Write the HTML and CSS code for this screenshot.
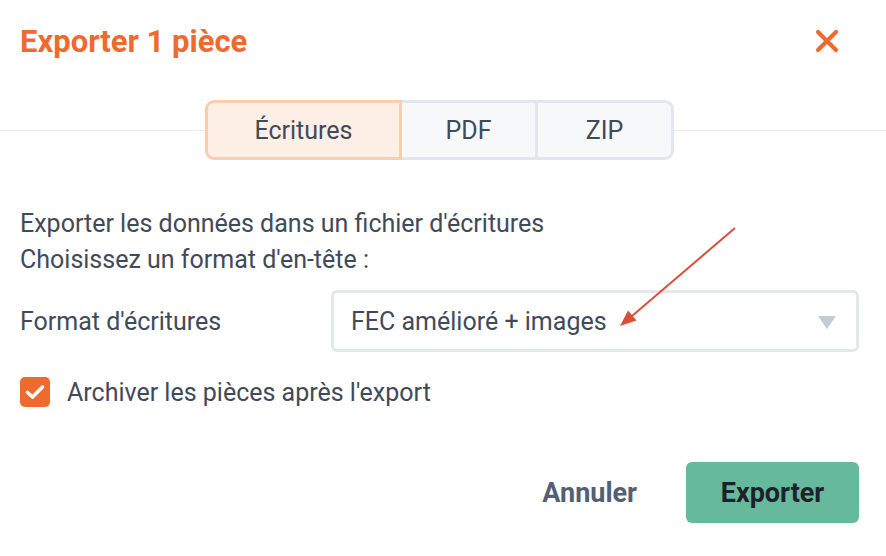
FILE: index.html
```html
<!DOCTYPE html>
<html lang="fr">
<head>
    <meta charset="UTF-8">
    <meta name="viewport" content="width=device-width, initial-scale=1.0">
    <title>Exporter 1 pièce</title>
    <link rel="stylesheet" href="styles.css">
</head>
<body>
    <div class="modal">
        <header class="modal-header">
            <h1 class="modal-title">Exporter 1 pièce</h1>
            <button class="close-btn" aria-label="Fermer">
                <svg width="24" height="24" viewBox="0 0 24 24">
                    <path d="M3 3 L21 21 M21 3 L3 21" stroke="#ee6a2f" stroke-width="4.2" stroke-linecap="round"/>
                </svg>
            </button>
        </header>

        <div class="tabs-row">
            <span class="tabs-line tabs-line-left"></span>
            <div class="tabs">
                <button class="tab active tab-wide">Écritures</button>
                <button class="tab">PDF</button>
                <button class="tab">ZIP</button>
            </div>
            <span class="tabs-line"></span>
        </div>

        <main class="modal-body">
            <p class="intro">Exporter les données dans un fichier d'écritures<br>Choisissez un format d'en-tête :</p>

            <div class="form-row">
                <label class="form-label" for="format">Format d'écritures</label>
                <div class="select">
                    <span id="format">FEC amélioré + images</span>
                    <span class="caret"></span>
                </div>
            </div>

            <label class="check-row">
                <span class="checkbox">
                    <svg width="24" height="24" viewBox="0 0 24 24">
                        <path d="M4.5 12.5 L9.5 17 L19.5 7" fill="none" stroke="#fff" stroke-width="3.6" stroke-linecap="round" stroke-linejoin="round"/>
                    </svg>
                </span>
                Archiver les pièces après l'export
            </label>
        </main>

        <footer class="modal-footer">
            <button class="btn-cancel">Annuler</button>
            <button class="btn-export">Exporter</button>
        </footer>

        <!-- annotation arrow -->
        <svg class="annotation" width="886" height="556" viewBox="0 0 886 556">
            <line x1="735" y1="228" x2="632" y2="316" stroke="#d9503a" stroke-width="2"/>
            <polygon points="620,326 636.5,320.5 628,310.5" fill="#d9503a"/>
        </svg>
    </div>
</body>
</html>
```

FILE: styles.css
```css
body {
    margin: 0;
    font-family: Roboto, "Liberation Sans", Arial, sans-serif;
    background-color: #fff;
    color: #414a58;
}

.modal {
    position: relative;
    width: 886px;
    height: 556px;
    overflow: hidden;
}

.modal-header {
    height: 82px;
    padding: 0 47px 0 20px;
    display: flex;
    justify-content: space-between;
    align-items: center;
}

.modal-title {
    margin: 0;
    font-size: 31px;
    font-weight: bold;
    color: #ee6a2f;
}

.close-btn {
    border: none;
    background: none;
    padding: 0;
    width: 24px;
    height: 24px;
    cursor: pointer;
}

.tabs-row {
    margin-top: 18px;
    display: flex;
    align-items: center;
}

.tabs-line {
    flex: 1;
    height: 1px;
    background-color: #e9ebef;
}

.tabs-line-left {
    flex: none;
    width: 205px;
}

.tabs {
    display: flex;
    height: 60px;
}

.tab {
    width: 136px;
    font-family: inherit;
    font-size: 25px;
    color: #414a58;
    background-color: #f7f8fa;
    border: 3px solid #e3e6eb;
    border-left-width: 0;
    cursor: pointer;
}

.tab-wide {
    width: 197px;
}

.tab:first-child {
    border-left-width: 3px;
    border-radius: 9px 0 0 9px;
}

.tab:last-child {
    border-radius: 0 9px 9px 0;
}

.tab.active {
    background-color: #fdefe5;
    border-color: #f9cdb0;
}

.modal-body {
    padding: 0 27px 0 20px;
}

.intro {
    margin: 46px 0 0;
    font-size: 25px;
    line-height: 36px;
}

.form-row {
    margin-top: 12px;
    display: flex;
    align-items: center;
}

.form-label {
    width: 311px;
    font-size: 25px;
}

.select {
    flex: 1;
    height: 56px;
    border: 3px solid #e5e7eb;
    border-radius: 6px;
    padding: 0 20px 0 17px;
    display: flex;
    align-items: center;
    justify-content: space-between;
    font-size: 25px;
}

.caret {
    width: 0;
    height: 0;
    border-left: 9px solid transparent;
    border-right: 9px solid transparent;
    border-top: 13px solid #c5cbd4;
    margin-top: 2px;
}

.check-row {
    margin-top: 25px;
    display: flex;
    align-items: center;
    gap: 17px;
    font-size: 25px;
    cursor: pointer;
}

.checkbox {
    width: 30px;
    height: 30px;
    border-radius: 5px;
    background-color: #ee6a2f;
    display: flex;
    align-items: center;
    justify-content: center;
}

.modal-footer {
    margin-top: 55px;
    padding: 0 27px 0 20px;
    display: flex;
    justify-content: flex-end;
    align-items: center;
}

.btn-cancel {
    border: none;
    background: none;
    font-family: inherit;
    font-size: 27px;
    font-weight: bold;
    color: #535f72;
    padding: 0;
    margin-right: 49px;
    cursor: pointer;
}

.btn-export {
    width: 173px;
    height: 61px;
    border: none;
    border-radius: 6px;
    background-color: #66b99d;
    font-family: inherit;
    font-size: 27px;
    font-weight: bold;
    color: #1e2228;
    cursor: pointer;
}

.annotation {
    position: absolute;
    left: 0;
    top: 0;
    pointer-events: none;
}
```
